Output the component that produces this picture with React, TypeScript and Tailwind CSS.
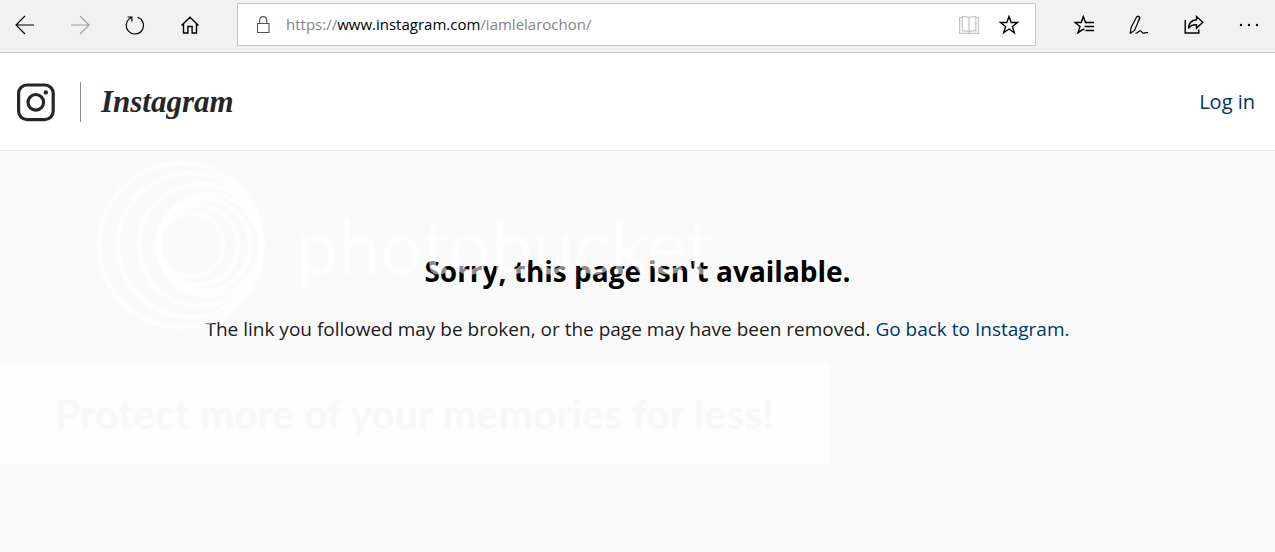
import { useState } from "react";
import type { ReactNode } from "react";

const ADDRESS = "https://www.instagram.com/iamlelarochon/";

function ToolButton({
  label,
  disabled,
  children,
}: {
  label: string;
  disabled?: boolean;
  children: ReactNode;
}) {
  return (
    <button
      type="button"
      aria-label={label}
      disabled={disabled}
      className="flex h-10 w-10 shrink-0 items-center justify-center text-black enabled:hover:bg-black/10 disabled:text-[#a0a0a0]"
    >
      <svg
        viewBox="0 0 20 20"
        className="h-5 w-5"
        fill="none"
        stroke="currentColor"
        strokeWidth="1.2"
        aria-hidden="true"
      >
        {children}
      </svg>
    </button>
  );
}

function AddressBar() {
  const [editing, setEditing] = useState(false);
  const [value, setValue] = useState(ADDRESS);

  return (
    <div className="flex h-[43px] min-w-0 flex-1 items-center border border-[#c6c6c6] bg-white pr-1.5 pl-4">
      <svg
        viewBox="0 0 20 20"
        className="h-5 w-5 shrink-0"
        fill="none"
        stroke="#555"
        strokeWidth="1.1"
        aria-hidden="true"
      >
        <path d="M3.500 8.500h11.500v9h-11.500z" />
        <path d="M5.700 8.500V5.200c0-2.100 1.500-3.600 3.500-3.600s3.500 1.500 3.500 3.600v3.300" />
      </svg>
      <div className="ml-3 grid min-w-0 flex-1 items-center text-[15px]">
        <input
          id="address"
          type="text"
          value={editing ? value : ""}
          onChange={(e) => setValue(e.target.value)}
          onFocus={() => setEditing(true)}
          onBlur={() => setEditing(false)}
          className="col-start-1 row-start-1 w-full bg-transparent outline-none"
        />
        {!editing && (
          <label
            htmlFor="address"
            className="col-start-1 row-start-1 cursor-text truncate text-[#858585]"
          >
            https://<span className="text-black">www.instagram.com</span>
            /iamlelarochon/
          </label>
        )}
      </div>
      <ToolButton label="Reading view" disabled>
        <g stroke="#c4c4c4">
          <path d="M3 2.500H.6v15.900h18.800V2.500H17" />
          <path d="M10 2.600C8.500 1.500 5.500 1.500 3.200 1.600v14.400c2.500-.2 5.300 0 6.800.8 1.500-.8 4.300-1 6.800-.8V1.600C14.500 1.500 11.500 1.500 10 2.600zM10 2.600v15.400" />
        </g>
      </ToolButton>
      <ToolButton label="Add to favorites">
        <path
          d="M10 1.500l2.200 6h6.300l-5.100 3.900 1.900 6.300L10 14l-5.300 3.700 1.900-6.300L1.500 7.500h6.300z"
          strokeWidth="1.400"
        />
      </ToolButton>
    </div>
  );
}

function Toolbar() {
  return (
    <div className="flex items-center border-b border-[#c8c8c8] bg-[#f1f1f1] pt-[3px] pb-1.5">
      <div className="flex gap-[15px] pl-[5px]">
        <ToolButton label="Back">
          <path d="M19 10H1M10 1L1 10l9 9" />
        </ToolButton>
        <ToolButton label="Forward" disabled>
          <path d="M1 10h18M10 1l9 9-9 9" />
        </ToolButton>
        <ToolButton label="Refresh">
          <path d="M12.500 2.200A8.600 8.600 0 1 1 6 2.700M2.600 2h4.300v4.400" />
        </ToolButton>
        <ToolButton label="Home">
          <path
            d="M1.500 10.500L10 2.300l8.500 8.200M3.500 9v9h4.400v-6.500h4.200V18h4.400V9"
            strokeWidth="1.400"
          />
        </ToolButton>
      </div>
      <div className="flex min-w-0 flex-1 pr-7 pl-[27px]">
        <AddressBar />
      </div>
      <div className="flex gap-[15px] pr-1.5">
        <ToolButton label="Hub">
          <path
            d="M12.500 7.500h-1L9.300 1.500 7.200 7.500H1l5 3.900-2 6.300 5.300-3.600 1.200.9"
            strokeWidth="1.400"
          />
          <path d="M11.500 7.500h8.500M10.500 11.500H20M11.500 15.500H20" strokeWidth="1.400" />
        </ToolButton>
        <ToolButton label="Add notes">
          <path d="M1 18.500L2.300 12 7.600 2C8.400.6 11 1.400 10.600 3.300L5.700 15.200 1 18.500M8.300 1.200l2.600 1.300-.6 2.900" />
          <path d="M6.500 18.300c2.500 0 3-2.800 5-2.400 1.300.3 1.300 2 2.700 2.200 1.500.3 2-.9 4.800-.4" />
        </ToolButton>
        <ToolButton label="Share">
          <path d="M1.200 5v13h13.600v-3.500" strokeWidth="1.400" />
          <path
            d="M12.500 1.500l6.300 5.800-6.300 5.800V9.800c-3.600-.2-6.200.8-8 3.700.3-5 3-8.500 8-8.800z"
            strokeWidth="1.400"
          />
        </ToolButton>
        <ToolButton label="Settings and more">
          <g fill="currentColor" stroke="none">
            <circle cx="2" cy="10" r="1.200" />
            <circle cx="10" cy="10" r="1.200" />
            <circle cx="18" cy="10" r="1.200" />
          </g>
        </ToolButton>
      </div>
    </div>
  );
}

function SiteHeader() {
  return (
    <header className="flex items-center justify-between border-b border-[#e9e9e9] bg-white pt-[29px] pr-5 pb-7 pl-4">
      <a href="#" className="flex items-center text-[#262626]">
        <svg
          viewBox="0 0 40 40"
          className="h-10 w-10"
          fill="none"
          stroke="currentColor"
          aria-hidden="true"
        >
          <rect x="2.600" y="3" width="34.600" height="34.600" rx="8.500" strokeWidth="3.200" />
          <circle cx="19.800" cy="20.300" r="7.800" strokeWidth="3.200" />
          <circle cx="29.800" cy="10.400" r="2.200" fill="currentColor" stroke="none" />
        </svg>
        <span className="mr-5 ml-6 h-10 w-px bg-[#8e8e8e]" />
        <span className="font-['Liberation_Serif',serif] text-[31px] leading-10 font-bold italic">
          Instagram
        </span>
      </a>
      <a href="#" className="text-xl text-[#003569]">
        Log in
      </a>
    </header>
  );
}

function Watermark() {
  return (
    <div className="pointer-events-none absolute inset-x-0 top-0 select-none">
      <div className="flex items-center pt-2 pl-24">
        <svg
          viewBox="0 0 172 172"
          className="h-[172px] w-[172px] shrink-0"
          fill="none"
          stroke="#fff"
          strokeOpacity="0.5"
          strokeWidth="5"
          aria-hidden="true"
        >
          <circle cx="85" cy="86" r="82" />
          <circle cx="94" cy="86" r="72" />
          <circle cx="104" cy="86" r="61" />
          <circle cx="113" cy="86" r="51" />
          <circle cx="108" cy="86" r="46" />
          <circle cx="102" cy="86" r="40" />
          <circle cx="95" cy="86" r="32" />
        </svg>
        <span className="ml-7 font-['Lato',sans-serif] text-[75px] leading-none text-white/55">
          photobucket
        </span>
      </div>
      <div className="mt-8 w-[65%] bg-white/60 px-12 py-6 font-['Lato',sans-serif] text-[41px] leading-[54px] font-bold whitespace-nowrap text-[#f8f8f8]">
        Protect more of your memories for less!
      </div>
    </div>
  );
}

export default function App() {
  return (
    <div className="flex min-h-screen flex-col bg-[#fafafa] font-['Open_Sans','Noto_Sans',sans-serif]">
      <Toolbar />
      <SiteHeader />
      <main className="relative flex-1 px-5 pt-[100px] text-center">
        <h1 className="text-[28px] leading-10 font-bold text-black">
          Sorry, this page isn't available.
        </h1>
        <p className="mt-6 text-[19px] leading-7 text-[#1a1a1a]">
          The link you followed may be broken, or the page may have been removed.{" "}
          <a href="#" className="text-[#003569]">
            Go back to Instagram.
          </a>
        </p>
        <Watermark />
      </main>
    </div>
  );
}
